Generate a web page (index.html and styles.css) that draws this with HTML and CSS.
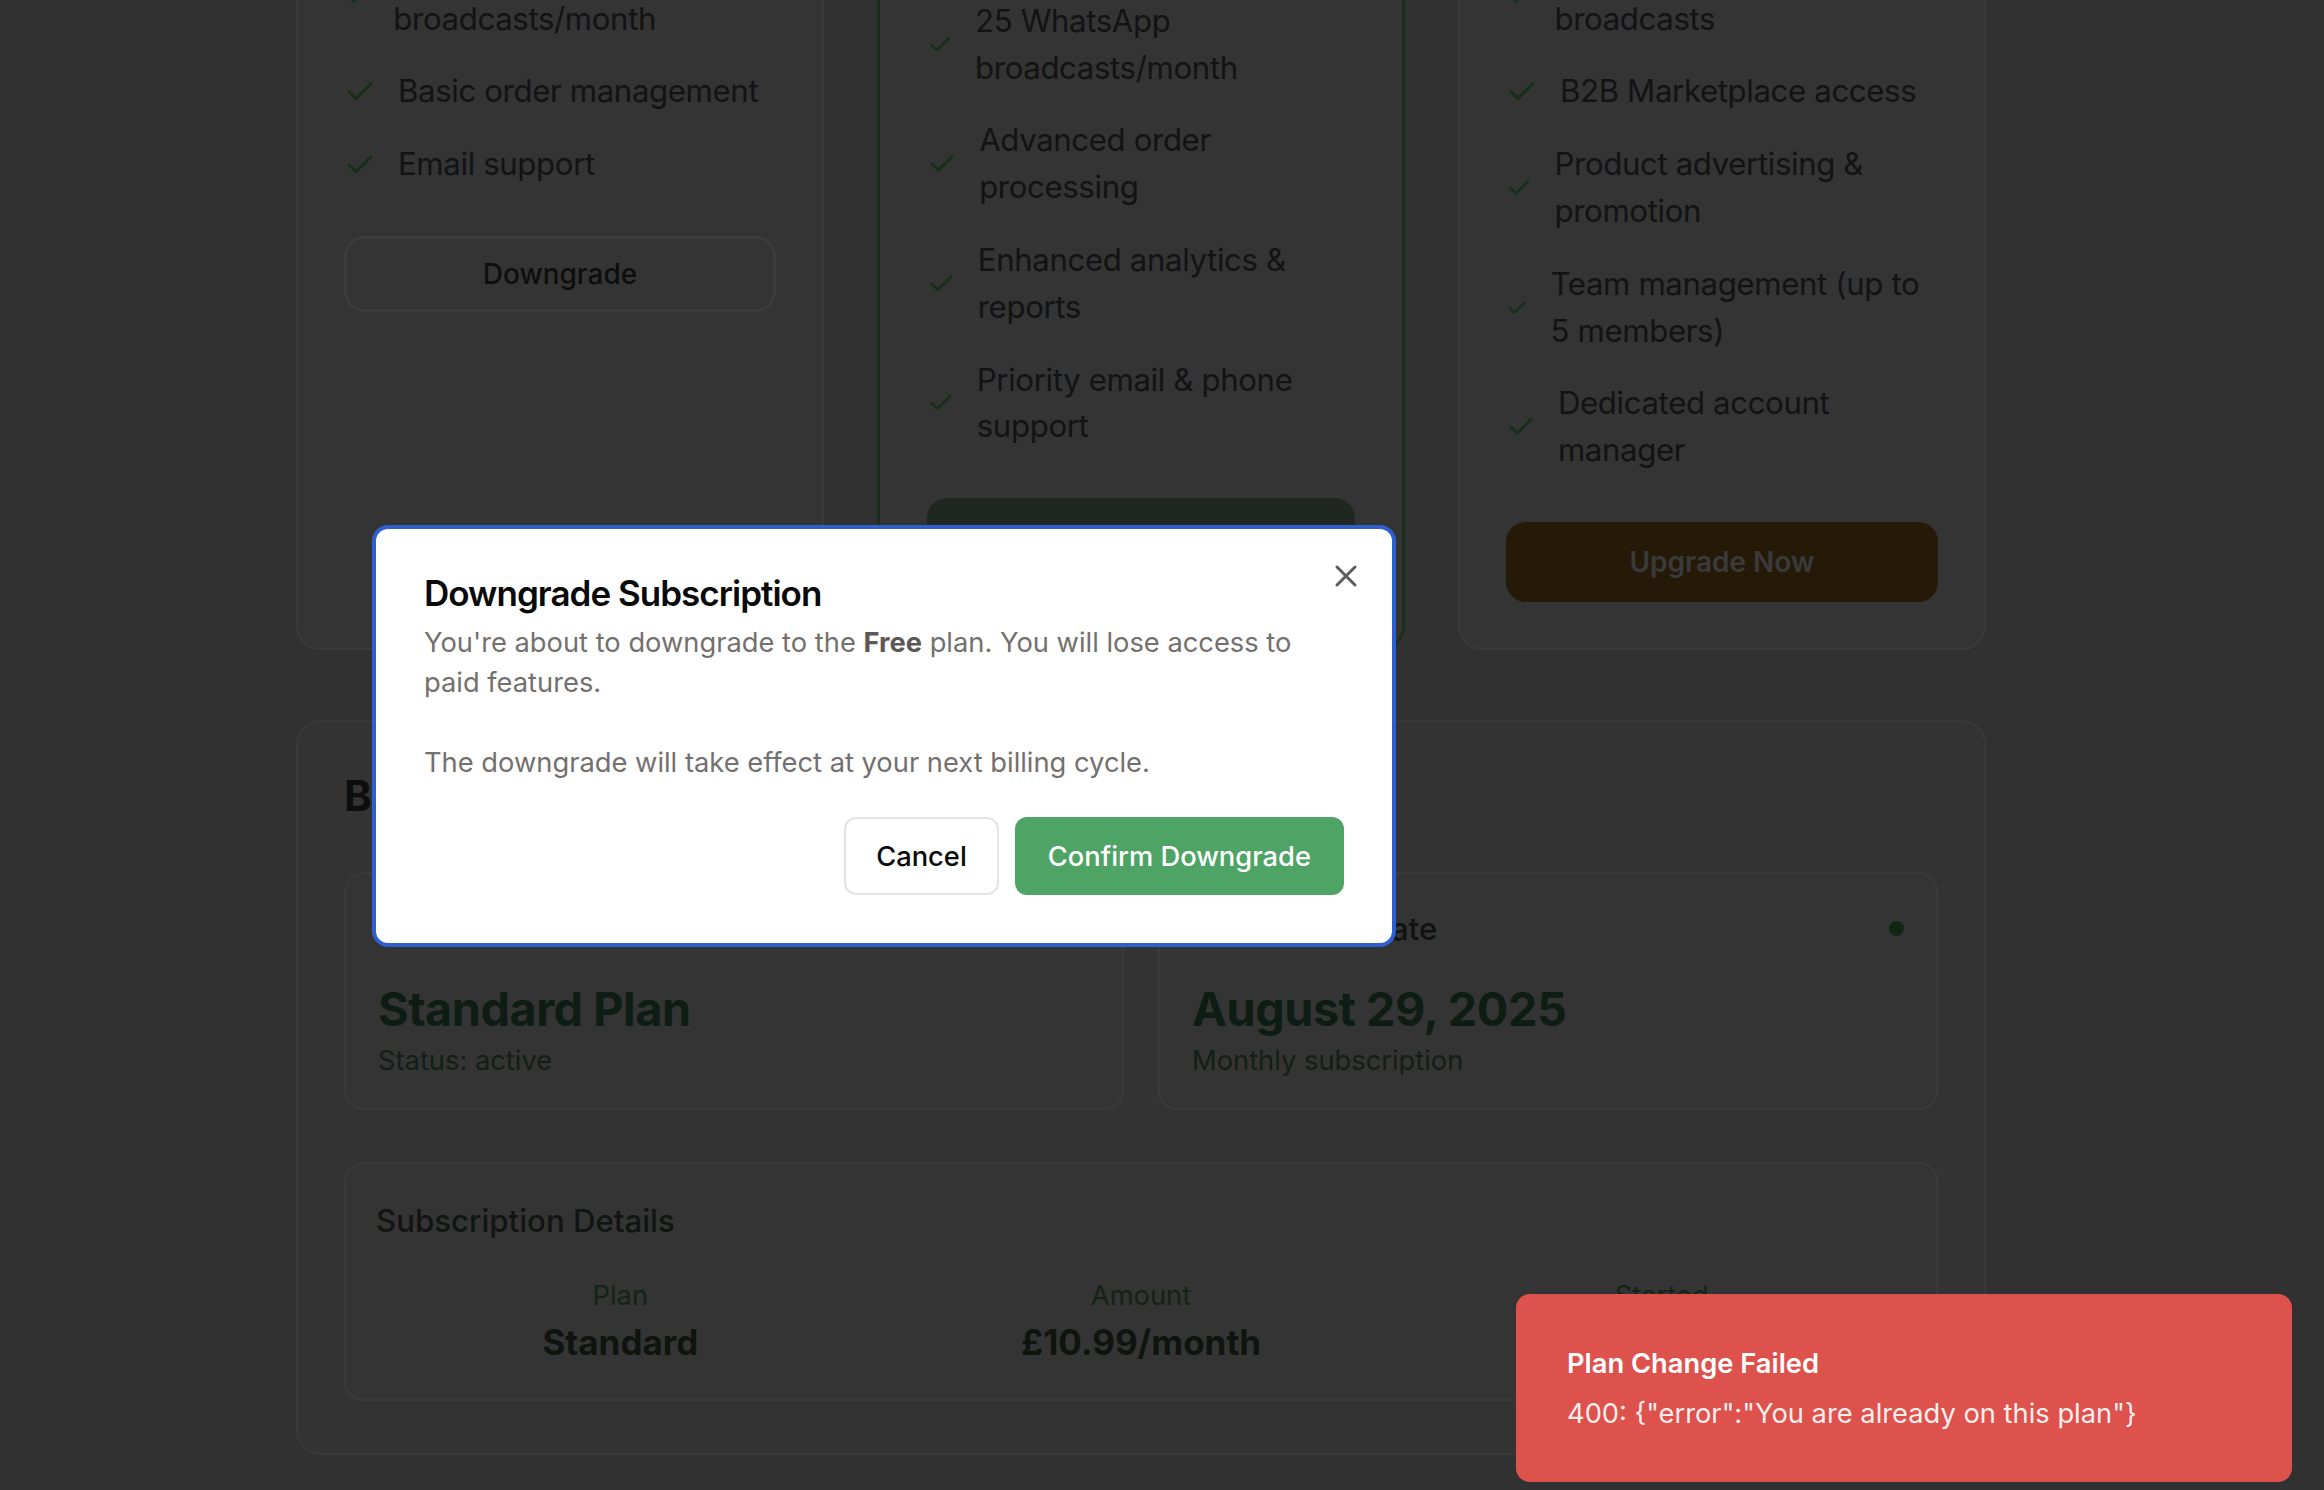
FILE: index.html
```html
<!DOCTYPE html>
<html lang="en">
<head>
<meta charset="utf-8">
<title>Subscription</title>
<link rel="stylesheet" href="styles.css">
</head>
<body>
<main class="page">
  <section class="plans">
    <article class="plan">
      <header class="plan-head">
        <h3 class="plan-name">Free</h3>
        <p class="plan-price">£0<span>/month</span></p>
      </header>
      <ul class="features">
        <li><svg class="check" viewBox="0 0 24 24"><path d="M20 6 9 17l-5-5"/></svg><span>Up to 20 products</span></li>
        <li><svg class="check" viewBox="0 0 24 24"><path d="M20 6 9 17l-5-5"/></svg><span>5 WhatsApp broadcasts/month</span></li>
        <li><svg class="check" viewBox="0 0 24 24"><path d="M20 6 9 17l-5-5"/></svg><span>Basic order management</span></li>
        <li><svg class="check" viewBox="0 0 24 24"><path d="M20 6 9 17l-5-5"/></svg><span>Email support</span></li>
      </ul>
      <button class="btn btn-outline">Downgrade</button>
    </article>

    <article class="plan plan-current">
      <div class="plan-badge">Current Plan</div>
      <header class="plan-head">
        <h3 class="plan-name">Standard</h3>
        <p class="plan-price">£10.99<span>/month</span></p>
      </header>
      <ul class="features">
        <li><svg class="check" viewBox="0 0 24 24"><path d="M20 6 9 17l-5-5"/></svg><span>Up to 200 products</span></li>
        <li><svg class="check" viewBox="0 0 24 24"><path d="M20 6 9 17l-5-5"/></svg><span>25 WhatsApp broadcasts/month</span></li>
        <li><svg class="check" viewBox="0 0 24 24"><path d="M20 6 9 17l-5-5"/></svg><span>Advanced order processing</span></li>
        <li><svg class="check" viewBox="0 0 24 24"><path d="M20 6 9 17l-5-5"/></svg><span>Enhanced analytics &amp; reports</span></li>
        <li><svg class="check" viewBox="0 0 24 24"><path d="M20 6 9 17l-5-5"/></svg><span>Priority email &amp; phone support</span></li>
      </ul>
      <button class="btn btn-green">Current Plan</button>
    </article>

    <article class="plan">
      <header class="plan-head">
        <h3 class="plan-name">Premium</h3>
        <p class="plan-price">£24.99<span>/month</span></p>
      </header>
      <ul class="features">
        <li><svg class="check" viewBox="0 0 24 24"><path d="M20 6 9 17l-5-5"/></svg><span>Unlimited products</span></li>
        <li><svg class="check" viewBox="0 0 24 24"><path d="M20 6 9 17l-5-5"/></svg><span>Unlimited WhatsApp broadcasts</span></li>
        <li><svg class="check" viewBox="0 0 24 24"><path d="M20 6 9 17l-5-5"/></svg><span>B2B Marketplace access</span></li>
        <li><svg class="check" viewBox="0 0 24 24"><path d="M20 6 9 17l-5-5"/></svg><span>Product advertising &amp; promotion</span></li>
        <li><svg class="check" viewBox="0 0 24 24"><path d="M20 6 9 17l-5-5"/></svg><span>Team management (up to 5 members)</span></li>
        <li><svg class="check" viewBox="0 0 24 24"><path d="M20 6 9 17l-5-5"/></svg><span>Dedicated account manager</span></li>
      </ul>
      <button class="btn btn-amber">Upgrade Now</button>
    </article>
  </section>

  <section class="billing">
    <h2 class="billing-title">Billing Information</h2>
    <div class="overview">
      <div class="stat-card">
        <div class="stat-head"><span class="stat-label">Current Plan</span></div>
        <div class="stat-value">Standard Plan</div>
        <div class="stat-sub">Status: active</div>
      </div>
      <div class="stat-card">
        <div class="stat-head"><span class="stat-label">Next Billing Date</span><span class="dot"></span></div>
        <div class="stat-value">August 29, 2025</div>
        <div class="stat-sub">Monthly subscription</div>
      </div>
    </div>
    <div class="details">
      <h3 class="details-title">Subscription Details</h3>
      <div class="details-grid">
        <div><div class="dl-label">Plan</div><div class="dl-value">Standard</div></div>
        <div><div class="dl-label">Amount</div><div class="dl-value">£10.99/month</div></div>
        <div><div class="dl-label">Started</div><div class="dl-value">July 29, 2025</div></div>
      </div>
    </div>
  </section>
</main>

<div class="overlay"></div>

<div class="dialog" role="dialog" aria-modal="true">
  <button class="dialog-close" aria-label="Close"><svg viewBox="0 0 24 24"><path d="M18 6 6 18M6 6l12 12"/></svg></button>
  <h2 class="dialog-title">Downgrade Subscription</h2>
  <div class="dialog-desc">
    <p>You're about to downgrade to the <strong>Free</strong> plan. You will lose access to paid features.</p>
    <p>The downgrade will take effect at your next billing cycle.</p>
  </div>
  <div class="dialog-actions">
    <button class="btn-cancel">Cancel</button>
    <button class="btn-confirm">Confirm Downgrade</button>
  </div>
</div>

<div class="toast" role="status">
  <div class="toast-title">Plan Change Failed</div>
  <div class="toast-msg">400: {"error":"You are already on this plan"}</div>
</div>
</body>
</html>
```

FILE: styles.css
```css
* { box-sizing: border-box; }

html, body {
  margin: 0;
  height: 1490px;
  overflow: hidden;
}

body {
  background: #626262;
  font-family: Inter, "Noto Sans", sans-serif;
  color: #262629;
}

.page {
  width: 1690px;
  margin-left: 296px;
  margin-top: -358px;
}

/* ---------- plans ---------- */
.plans {
  display: grid;
  grid-template-columns: repeat(3, 1fr);
  gap: 53px;
  align-items: stretch;
}

.plan {
  background: #686868;
  border: 2px solid #747474;
  border-radius: 24px;
  padding: 46px;
}

.plan-current {
  border: 3px solid #335e3a;
  padding: 45px 47px 47px;
}

.plan-badge {
  width: max-content;
  height: 36px;
  line-height: 36px;
  padding: 0 16px;
  margin-bottom: 13px;
  border-radius: 18px;
  background: #335e3a;
  color: #686868;
  font-size: 22px;
  font-weight: 600;
}

.plan-head {
  margin-bottom: 48px;
}

.plan-name {
  margin: 0;
  font-size: 36px;
  line-height: 48px;
  font-weight: 700;
  color: #242424;
}

.plan-price {
  margin: 8px 0 0;
  font-size: 56px;
  line-height: 72px;
  font-weight: 800;
  color: #242424;
}

.plan-price span {
  font-size: 28px;
  font-weight: 400;
}

.features {
  list-style: none;
  margin: 0 0 48px;
  padding: 0;
  display: flex;
  flex-direction: column;
  gap: 26px;
}

.features li {
  display: flex;
  align-items: center;
  gap: 22px;
  font-size: 31.2px;
  line-height: 46.8px;
  letter-spacing: -0.012em;
  color: #262629;
}

.check {
  width: 32px;
  height: 32px;
  min-width: 0;
  fill: none;
  stroke: #2a5e31;
  stroke-width: 2.3;
  stroke-linecap: round;
  stroke-linejoin: round;
}

.btn {
  display: block;
  width: 100%;
  border-radius: 20px;
  font-family: inherit;
  font-size: 28px;
  font-weight: 600;
}

.btn-outline {
  height: 76px;
  background: #686868;
  border: 3px solid #787878;
  color: #1c1c1c;
  font-weight: 500;
}

.btn-green {
  height: 80px;
  background: #404e40;
  border: 0;
  color: #787878;
}

.btn-amber {
  height: 80px;
  background: #4a3211;
  border: 0;
  color: #747474;
}

/* ---------- billing ---------- */
.billing {
  margin-top: 70px;
  background: #666666;
  border: 2px solid #727272;
  border-radius: 24px;
  padding: 46px 46px 52px;
}

.billing-title {
  margin: 0;
  font-size: 42px;
  line-height: 56px;
  font-weight: 700;
  letter-spacing: -0.01em;
  color: #1a1a1a;
}

.overview {
  margin-top: 48px;
  display: grid;
  grid-template-columns: 1fr 1fr;
  gap: 34px;
}

.stat-card {
  background: #686868;
  border: 2px solid #747474;
  border-radius: 20px;
  padding: 33px 32px 27px;
}

.stat-head {
  display: flex;
  justify-content: space-between;
  align-items: center;
  height: 44px;
}

.stat-label {
  font-size: 31.2px;
  line-height: 44px;
  font-weight: 500;
  color: #202420;
}

.dot {
  width: 15px;
  height: 15px;
  border-radius: 50%;
  background: #224e28;
}

.stat-value {
  margin-top: 30px;
  font-size: 46.8px;
  line-height: 56px;
  font-weight: 700;
  letter-spacing: -0.01em;
  color: #1c3a26;
}

.stat-sub {
  margin-top: 4px;
  font-size: 27.3px;
  line-height: 40px;
  color: #263e2c;
}

.details {
  margin-top: 52px;
  background: #686868;
  border: 2px solid #747474;
  border-radius: 20px;
  padding: 37px 30px 33px;
}

.details-title {
  margin: 0;
  font-size: 31.2px;
  line-height: 40px;
  font-weight: 500;
  color: #242a24;
}

.details-grid {
  margin-top: 35px;
  display: grid;
  grid-template-columns: repeat(3, 1fr);
  gap: 32px;
  text-align: center;
}

.dl-label {
  font-size: 27.3px;
  line-height: 40px;
  color: #2a462e;
}

.dl-value {
  margin-top: 2px;
  font-size: 35px;
  line-height: 48px;
  font-weight: 700;
  color: #1e281e;
}

/* ---------- overlay & dialog ---------- */
.overlay {
  position: fixed;
  inset: 0;
  background: rgba(0, 0, 0, 0.5);
}

.dialog {
  position: fixed;
  left: 372px;
  top: 525px;
  width: 1024px;
  background: #ffffff;
  border: 4px solid #2d5fcf;
  border-radius: 16px;
  padding: 44px 48px 48px;
}

.dialog-close {
  position: absolute;
  top: 29px;
  right: 28px;
  width: 36px;
  height: 36px;
  padding: 0;
  border: 0;
  background: none;
}

.dialog-close svg {
  display: block;
  width: 36px;
  height: 36px;
  fill: none;
  stroke: #5c5c5c;
  stroke-width: 2;
  stroke-linecap: round;
}

.dialog-title {
  margin: 0;
  font-size: 35px;
  line-height: 40px;
  font-weight: 600;
  letter-spacing: -0.028em;
  color: #0a0a0a;
}

.dialog-desc {
  margin-top: 10px;
  font-size: 27.3px;
  line-height: 40px;
  color: #74706e;
}

.dialog-desc p {
  margin: 0;
}

.dialog-desc p + p {
  margin-top: 40px;
}

.dialog-desc strong {
  font-weight: 700;
  color: #5c5856;
}

.dialog-actions {
  margin-top: 34px;
  display: flex;
  justify-content: flex-end;
  gap: 16px;
}

.btn-cancel,
.btn-confirm {
  height: 78px;
  padding: 0 33px;
  border-radius: 12px;
  font-family: inherit;
  font-size: 27.3px;
  font-weight: 500;
}

.btn-cancel {
  padding: 0 30px;
  background: #ffffff;
  border: 2px solid #e4e4e4;
  color: #0a0a0a;
}

.btn-confirm {
  background: #4da465;
  border: 0;
  color: #ffffff;
}

/* ---------- toast ---------- */
.toast {
  position: fixed;
  right: 32px;
  bottom: 8px;
  width: 776px;
  height: 188px;
  background: #de524e;
  border-radius: 14px;
  padding: 50px 48px 50px 51px;
  color: #ffffff;
}

.toast-title {
  font-size: 27.3px;
  line-height: 40px;
  font-weight: 600;
}

.toast-msg {
  margin-top: 10px;
  font-size: 27.3px;
  line-height: 40px;
  color: rgba(255, 255, 255, 0.92);
}
```
